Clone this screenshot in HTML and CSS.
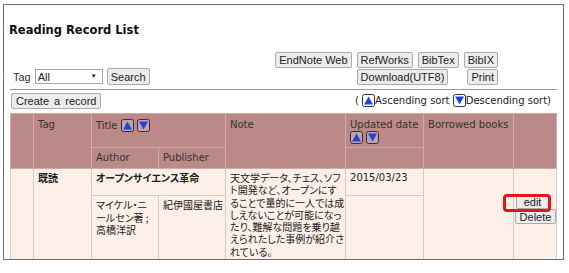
FILE: index.html
```html
<!DOCTYPE html>
<html lang="en">
<head>
    <meta charset="UTF-8">
    <meta name="viewport" content="width=device-width, initial-scale=1.0">
    <title>Reading Record List</title>
    <link rel="stylesheet" href="styles.css">
</head>
<body>
    <svg class="sprites" aria-hidden="true">
        <symbol id="sort-up" viewBox="0 0 13 13">
            <rect x="0.5" y="0.5" width="12" height="12" rx="2" fill="rgba(255,255,255,0.2)" stroke="#2b2d55"/>
            <polygon points="2,10.5 6.5,2.5 11,10.5" fill="#1a44e6"/>
        </symbol>
        <symbol id="sort-down" viewBox="0 0 13 13">
            <rect x="0.5" y="0.5" width="12" height="12" rx="2" fill="rgba(255,255,255,0.2)" stroke="#2b2d55"/>
            <polygon points="2,2.5 11,2.5 6.5,10.5" fill="#1a44e6"/>
        </symbol>
    </svg>

    <div class="frame">
        <h1 class="page-title">Reading Record List</h1>

        <div class="toolbar">
            <form class="tag-filter">
                <label for="tag">Tag</label>
                <span class="select-wrap">
                    <select id="tag"><option>All</option></select>
                </span>
                <button type="button" class="btn">Search</button>
            </form>
            <div class="exports">
                <button class="btn">EndNote Web</button>
                <button class="btn">RefWorks</button>
                <button class="btn">BibTex</button>
                <button class="btn">BibIX</button>
                <button class="btn btn-download">Download(UTF8)</button>
                <button class="btn btn-print">Print</button>
            </div>
        </div>

        <div class="record-bar">
            <button class="btn btn-create">Create a record</button>
            <span class="sort-legend">( <svg class="sort-icon"><use href="#sort-up"/></svg>Ascending sort <svg class="sort-icon"><use href="#sort-down"/></svg>Descending sort)</span>
        </div>

        <table class="records">
            <colgroup>
                <col style="width:23px">
                <col style="width:58px">
                <col style="width:67px">
                <col style="width:67px">
                <col style="width:120px">
                <col style="width:78px">
                <col style="width:90px">
                <col style="width:43px">
            </colgroup>
            <thead>
                <tr class="head-top">
                    <th rowspan="2"></th>
                    <th rowspan="2">Tag</th>
                    <th colspan="2">Title <svg class="sort-icon"><use href="#sort-up"/></svg> <svg class="sort-icon"><use href="#sort-down"/></svg></th>
                    <th rowspan="2">Note</th>
                    <th>Updated date<br><svg class="sort-icon"><use href="#sort-up"/></svg> <svg class="sort-icon"><use href="#sort-down"/></svg></th>
                    <th rowspan="2">Borrowed books</th>
                    <th rowspan="2"></th>
                </tr>
                <tr class="head-sub">
                    <th>Author</th>
                    <th>Publisher</th>
                    <th></th>
                </tr>
            </thead>
            <tbody>
                <tr class="row-main">
                    <td rowspan="2"></td>
                    <td rowspan="2" class="ja strong" lang="ja">既読</td>
                    <td colspan="2" class="ja strong" lang="ja">オープンサイエンス革命</td>
                    <td rowspan="2" class="ja note" lang="ja">天文学データ、チェス、ソフ<br>ト開発など、オープンにす<br>ることで量的に一人では成<br>しえないことが可能になっ<br>たり、難解な問題を乗り越<br>えられたした事例が紹介さ<br>れている。</td>
                    <td>2015/03/23</td>
                    <td rowspan="2"></td>
                    <td rowspan="2" class="actions">
                        <span class="edit-wrap"><button class="btn btn-edit">edit</button></span>
                        <button class="btn btn-delete">Delete</button>
                    </td>
                </tr>
                <tr class="row-sub">
                    <td class="ja" lang="ja">マイケル・ニ<br>ールセン著 ;<br>高橋洋訳</td>
                    <td class="ja" lang="ja">紀伊國屋書店</td>
                    <td></td>
                </tr>
            </tbody>
        </table>
    </div>
</body>
</html>
```

FILE: styles.css
```css
body {
    margin: 0;
    font-family: "DejaVu Sans", "Noto Sans CJK JP", sans-serif;
    font-size: 10px;
    color: #222;
    background: #fff;
}

.sprites {
    display: none;
}

.frame {
    margin: 4px 0 0 3px;
    width: 547px;
    height: 254px;
    padding: 0 6px;
    border: 1px solid #6e6e6e;
    overflow: hidden;
}

.page-title {
    margin: 17px 0 0 -1px;
    font-size: 11.5px;
    line-height: 16px;
    font-weight: bold;
    color: #111;
}

.btn {
    box-sizing: border-box;
    height: 16px;
    padding: 0 3px;
    font-family: "Liberation Sans", Arial, sans-serif;
    font-size: 11px;
    line-height: 14px;
    color: #222;
    background: #ececec;
    border: 1px solid #ababab;
    border-radius: 2px;
    cursor: pointer;
}

.toolbar {
    display: flex;
    align-items: flex-end;
    margin-top: 14px;
    padding-bottom: 4px;
    border-bottom: 1px solid #999;
}

.tag-filter {
    display: flex;
    align-items: center;
    margin: 0 0 0 3px;
    font-family: "Liberation Sans", Arial, sans-serif;
    font-size: 11px;
    color: #333;
}

.tag-filter label {
    margin-right: 4px;
}

.select-wrap {
    position: relative;
    margin-right: 4px;
}

.select-wrap select {
    appearance: none;
    box-sizing: border-box;
    width: 68px;
    height: 15px;
    padding: 0 0 0 2px;
    font-family: "Liberation Sans", Arial, sans-serif;
    font-size: 11px;
    color: #222;
    background: #fff;
    border: 1px solid #a9a9a9;
    border-radius: 0;
    display: block;
}

.select-wrap::after {
    content: "▼";
    position: absolute;
    right: 6px;
    top: 4px;
    font-size: 6px;
    color: #222;
    pointer-events: none;
}

.tag-filter .btn {
    height: 17px;
}

.exports {
    display: grid;
    grid-template-columns: repeat(4, auto);
    column-gap: 5px;
    row-gap: 1px;
    margin-left: auto;
    margin-right: 59px;
}

.btn-download {
    grid-column: 2 / 4;
    justify-self: start;
}

.btn-print {
    grid-column: 4;
    justify-self: end;
}

.record-bar {
    display: flex;
    align-items: center;
    justify-content: space-between;
    margin-top: 3px;
}

.btn-create {
    margin-left: 1px;
    word-spacing: 2px;
    padding: 0 4px;
}

.sort-legend {
    padding-right: 6px;
    line-height: 14px;
    color: #222;
    white-space: nowrap;
}

.sort-icon {
    width: 13px;
    height: 13px;
    vertical-align: middle;
}

.sort-legend .sort-icon {
    margin-top: -2px;
}

.records {
    width: 546px;
    margin-top: 4px;
    table-layout: fixed;
    border-collapse: collapse;
}

.records th {
    padding: 5px 4px 3px;
    font-weight: normal;
    text-align: left;
    vertical-align: top;
    line-height: 12px;
    color: #333;
    background: #bb8987;
    border: 1px solid #d2a9a7;
}

.records .head-top {
    height: 33px;
}

.records .head-sub {
    height: 21px;
}

.records .head-sub th {
    vertical-align: middle;
    padding-top: 2px;
}

.records td {
    padding: 3px 4px;
    vertical-align: top;
    line-height: 12.5px;
    background: #fbefe7;
    border: 1px solid #d6ccc6;
}

.records .row-main {
    height: 27px;
}

.ja {
    font-family: "Noto Sans CJK JP", sans-serif;
    font-size: 10px;
    font-feature-settings: "palt";
    white-space: nowrap;
}

.strong {
    font-weight: bold;
}

.records td.note {
    padding: 3px 3px 3px 4px;
    line-height: 12.3px;
}

.records td.actions {
    padding: 0 0 12px 1px;
    vertical-align: middle;
}

.edit-wrap {
    position: relative;
    display: block;
    width: 33px;
    margin: 0 0 0 1px;
}

.edit-wrap::before {
    content: "";
    position: absolute;
    left: -13px;
    right: -2px;
    top: 0;
    bottom: -3px;
    border: 3px solid #e3141c;
    border-radius: 4px;
}

.btn-edit {
    display: block;
    width: 33px;
    height: 15px;
}

.btn-delete {
    display: block;
    width: 41px;
    height: 15px;
    margin-top: 0;
}
```
